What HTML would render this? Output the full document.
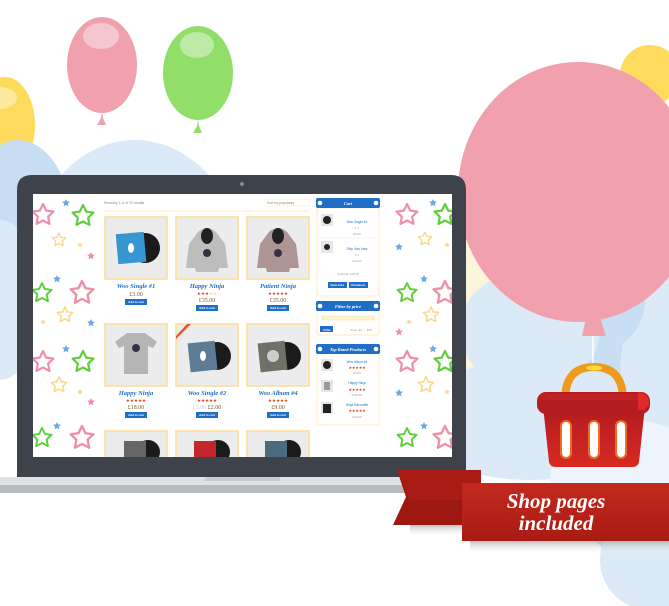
<!DOCTYPE html>
<html><head><meta charset="utf-8"><style>
html,body{margin:0;padding:0;background:#fff;}
svg{display:block;}
</style></head><body>
<svg width="669" height="606" viewBox="0 0 669 606" xmlns="http://www.w3.org/2000/svg" font-family="Liberation Sans, sans-serif">
<defs>
<symbol id="st" viewBox="-10 -10 20 20" overflow="visible"><polygon points="0,-10 2.9,-4 9.5,-3.1 4.7,1.5 5.9,8.1 0,5 -5.9,8.1 -4.7,1.5 -9.5,-3.1 -2.9,-4"/></symbol>
<linearGradient id="rb" x1="0" y1="0" x2="0" y2="1"><stop offset="0" stop-color="#c42a1f"/><stop offset="1" stop-color="#a81b14"/></linearGradient>
<linearGradient id="bk" x1="0" y1="0" x2="0" y2="1"><stop offset="0" stop-color="#b01b20"/><stop offset="1" stop-color="#d82a22"/></linearGradient>
<linearGradient id="sh" x1="0" y1="0" x2="0" y2="1"><stop offset="0" stop-color="#999" stop-opacity=".6"/><stop offset="1" stop-color="#fff" stop-opacity="0"/></linearGradient>
<clipPath id="scr"><rect x="33" y="194" width="419" height="263"/></clipPath>
</defs>
<!-- background -->
<rect width="669" height="606" fill="#fff"/>
<path d="M380 200 L600 200 L600 380 L380 380Z" fill="#fbf5dc"/>
<ellipse cx="650" cy="75" rx="30" ry="30" fill="#fedb5d"/>
<ellipse cx="640" cy="420" rx="90" ry="140" fill="#c8def3"/>
<ellipse cx="700" cy="380" rx="80" ry="140" fill="#dceaf7"/>
<ellipse cx="600" cy="300" rx="45" ry="50" fill="#c8def3"/>
<ellipse cx="530" cy="330" rx="70" ry="60" fill="#dceaf7"/>
<ellipse cx="530" cy="420" rx="120" ry="60" fill="#dceaf7"/>
<ellipse cx="630" cy="480" rx="80" ry="60" fill="#eef4fb"/>
<ellipse cx="650" cy="560" rx="50" ry="50" fill="#dceaf7"/>
<ellipse cx="5" cy="125" rx="30" ry="48" fill="#fedb5d"/>
<ellipse cx="0" cy="98" rx="17" ry="11" fill="#fde89e"/>
<ellipse cx="18" cy="230" rx="55" ry="90" fill="#c6ddf2"/>
<ellipse cx="135" cy="290" rx="115" ry="150" fill="#dceaf7"/>
<ellipse cx="303" cy="260" rx="50" ry="55" fill="#dceaf7"/>
<ellipse cx="0" cy="300" rx="40" ry="80" fill="#dceaf7"/>
<!-- small balloons -->
<ellipse cx="102" cy="65" rx="35" ry="48" fill="#f1a1ae"/>
<ellipse cx="101" cy="36" rx="18" ry="13" fill="#f6c6d0"/>
<path d="M102 112 L101 118 L97 125 L106 125 L103 118Z" fill="#f1a1ae"/>
<ellipse cx="198" cy="73" rx="35" ry="47" fill="#91df69"/>
<ellipse cx="197" cy="45" rx="17" ry="13" fill="#bdeaa6"/>
<path d="M198 120 L197 126 L193 133 L202 133 L199 126Z" fill="#91df69"/>
<!-- big balloon -->
<ellipse cx="578" cy="192" rx="120" ry="130" fill="#f1a1ae"/>
<path d="M586 318 L600 318 L606 336 L582 336Z" fill="#f1a1ae"/>
<line x1="593" y1="336" x2="593" y2="368" stroke="#fff" stroke-width="1.5"/>
<!-- basket -->
<path d="M565 400 Q565 367 594 367 Q623 367 623 400" fill="none" stroke="#ee9a1e" stroke-width="8" stroke-linecap="round"/>
<ellipse cx="594" cy="368" rx="8" ry="2.5" fill="#fde13a"/>
<path d="M543 406 L645 406 L639 462 Q638 467 632 467 L556 467 Q550 467 549 462Z" fill="url(#bk)"/>
<rect x="537" y="392" width="113" height="22" rx="9" fill="#b51c22"/>
<rect x="540" y="394" width="107" height="6" rx="3" fill="#c8252a" opacity=".6"/>
<path d="M638 392 Q650 394 649 405 L644 410 L638 410Z" fill="#e02a2a"/>
<g fill="#fff" stroke="#f06a22" stroke-width="2"><rect x="561" y="421" width="10" height="37" rx="5"/><rect x="589" y="421" width="10" height="37" rx="5"/><rect x="616" y="421" width="10" height="37" rx="5"/></g>
<!-- laptop -->
<path d="M17 190 Q17 175 32 175 L451 175 Q466 175 466 190 L466 477 L17 477Z" fill="#3d424b"/>
<circle cx="242" cy="184" r="2" fill="#888"/>
<rect x="0" y="477" width="472" height="8" fill="#dfe1e5"/>
<rect x="0" y="485" width="472" height="8" fill="#b8babd"/>
<rect x="205" y="477" width="75" height="4" fill="#c8cacd"/>
<!-- screen -->
<rect x="33" y="194" width="419" height="263" fill="#fff"/>
<g clip-path="url(#scr)">
<g stroke-width="2" stroke-linejoin="round">
<g fill="#fff" stroke="#f08fa8">
<use href="#st" x="32" y="204" width="22" height="22"/><use href="#st" x="70" y="281" width="24" height="24"/><use href="#st" x="32" y="351" width="22" height="22"/><use href="#st" x="70" y="426" width="24" height="24"/>
<use href="#st" x="396" y="204" width="22" height="22"/><use href="#st" x="433" y="281" width="24" height="24"/><use href="#st" x="396" y="351" width="22" height="22"/><use href="#st" x="433" y="426" width="24" height="24"/>
</g>
<g fill="#fff" stroke="#5fcf3e">
<use href="#st" x="72" y="205" width="22" height="22"/><use href="#st" x="32" y="283" width="20" height="20"/><use href="#st" x="72" y="351" width="22" height="22"/><use href="#st" x="32" y="428" width="20" height="20"/>
<use href="#st" x="434" y="204" width="22" height="22"/><use href="#st" x="397" y="283" width="20" height="20"/><use href="#st" x="434" y="351" width="22" height="22"/><use href="#st" x="397" y="428" width="20" height="20"/>
</g>
<g fill="#fff" stroke="#fcd98a">
<use href="#st" x="52" y="233" width="14" height="14"/><use href="#st" x="57" y="307" width="16" height="16"/><use href="#st" x="51" y="377" width="16" height="16"/>
<use href="#st" x="418" y="232" width="14" height="14"/><use href="#st" x="423" y="307" width="16" height="16"/><use href="#st" x="418" y="377" width="16" height="16"/>
</g>
</g>
<g fill="#6aa8e6">
<use href="#st" x="62" y="199" width="8" height="8"/><use href="#st" x="53" y="275" width="8" height="8"/><use href="#st" x="87" y="319" width="8" height="8"/><use href="#st" x="62" y="345" width="8" height="8"/><use href="#st" x="53" y="422" width="8" height="8"/>
<use href="#st" x="429" y="199" width="8" height="8"/><use href="#st" x="395" y="243" width="8" height="8"/><use href="#st" x="420" y="275" width="8" height="8"/><use href="#st" x="429" y="345" width="8" height="8"/><use href="#st" x="395" y="389" width="8" height="8"/><use href="#st" x="420" y="422" width="8" height="8"/>
</g>
<g fill="#f08fa8"><use href="#st" x="87" y="252" width="8" height="8"/><use href="#st" x="87" y="398" width="8" height="8"/><use href="#st" x="395" y="328" width="8" height="8"/></g>
<g fill="#fcd98a"><use href="#st" x="77" y="242" width="6" height="6"/><use href="#st" x="40" y="319" width="6" height="6"/><use href="#st" x="77" y="389" width="6" height="6"/><use href="#st" x="444" y="242" width="6" height="6"/><use href="#st" x="406" y="319" width="6" height="6"/><use href="#st" x="444" y="389" width="6" height="6"/></g>

<text x="104" y="204" font-size="3.5" fill="#888">Showing 1–9 of 23 results</text>
<rect x="265" y="199" width="44" height="7" fill="#fff" stroke="#fdeecf" stroke-width=".7"/>
<text x="267" y="204" font-size="3.5" fill="#888">Sort by popularity</text>
<line x1="104" y1="211" x2="309" y2="211" stroke="#fdeecf" stroke-width="1"/>

<!-- products -->
<g fill="#ececec" stroke="#fde2a6" stroke-width="1.8">
<rect x="105" y="217" width="62" height="62"/><rect x="176" y="217" width="62" height="62"/><rect x="247" y="217" width="62" height="62"/>
<rect x="105" y="324" width="62" height="62"/><rect x="176" y="324" width="62" height="62"/><rect x="247" y="324" width="62" height="62"/>
<rect x="105" y="431" width="62" height="62"/><rect x="176" y="431" width="62" height="62"/><rect x="247" y="431" width="62" height="62"/>
</g>
<!-- p1 vinyl -->
<circle cx="145" cy="248" r="15" fill="#1b1b1b"/><rect x="117" y="233" width="28" height="30" fill="#3596d2" transform="rotate(-5 131 248)"/><ellipse cx="131" cy="248" rx="3" ry="5" fill="#fff"/>
<!-- hoodies -->
<path d="M198 232 Q207 224 216 232 L225 244 L228 268 L219 268 L218 272 L196 272 L195 268 L186 268 L189 244Z" fill="#bdbdbd"/><ellipse cx="207" cy="236" rx="6" ry="8" fill="#222"/><circle cx="207" cy="253" r="4" fill="#334"/>
<path d="M269 232 Q278 224 287 232 L296 244 L299 268 L290 268 L289 272 L267 272 L266 268 L257 268 L260 244Z" fill="#ad9595"/><ellipse cx="278" cy="236" rx="6" ry="8" fill="#222"/><circle cx="278" cy="253" r="4" fill="#334"/>
<!-- row2 -->
<path d="M127 333 L145 333 L157 342 L153 348 L148 346 L148 374 L124 374 L124 346 L119 348 L115 342Z" fill="#b5b5b5"/><circle cx="136" cy="348" r="4" fill="#334"/>
<circle cx="217" cy="356" r="14" fill="#1b1b1b"/><rect x="189" y="342" width="27" height="29" fill="#5c7c95" transform="rotate(-6 203 356)"/><ellipse cx="203" cy="356" rx="3" ry="5" fill="#fff"/>
<path d="M176 336 L187 324 L191 324 L176 339Z" fill="#e8572b"/>
<circle cx="287" cy="356" r="14" fill="#1b1b1b"/><rect x="259" y="342" width="27" height="29" fill="#6d7168" transform="rotate(-6 273 356)"/><circle cx="273" cy="356" r="6" fill="#ccc"/>
<!-- row3 -->
<circle cx="148" cy="452" r="12" fill="#1b1b1b"/><rect x="124" y="441" width="22" height="20" fill="#666"/>
<circle cx="218" cy="452" r="12" fill="#1b1b1b"/><rect x="194" y="441" width="22" height="20" fill="#c3272b"/>
<circle cx="289" cy="452" r="12" fill="#1b1b1b"/><rect x="265" y="441" width="22" height="20" fill="#4b6b80"/>

<g font-family="Liberation Serif, serif" font-style="italic" font-weight="bold" fill="#1f6fc6" font-size="6.5" text-anchor="middle">
<text x="136" y="288">Woo Single #1</text><text x="207" y="288">Happy Ninja</text><text x="278" y="288">Patient Ninja</text>
<text x="136" y="395">Happy Ninja</text><text x="207" y="395">Woo Single #2</text><text x="278" y="395">Woo Album #4</text>
</g>
<g fill="#e53a1a" font-size="4.5" text-anchor="middle">
<text x="207" y="295">★★★<tspan fill="#f5d9a0">★★</tspan></text><text x="278" y="295">★★★★★</text>
<text x="136" y="402">★★★★★</text><text x="207" y="402">★★★★★</text><text x="278" y="402">★★★★★</text>
</g>
<g font-family="Liberation Serif, serif" fill="#7a5a2a" font-size="6" text-anchor="middle">
<text x="136" y="296">£3.00</text><text x="207" y="302">£35.00</text><text x="278" y="302">£35.00</text>
<text x="136" y="409">£18.00</text><text x="207" y="409"><tspan fill="#ccc">£3.00</tspan> £2.00</text><text x="278" y="409">£9.00</text>
</g>
<g fill="#1f6fc6">
<rect x="125" y="299" width="22" height="6"/><rect x="196" y="305" width="22" height="6"/><rect x="267" y="305" width="22" height="6"/>
<rect x="125" y="412" width="22" height="6"/><rect x="196" y="412" width="22" height="6"/><rect x="267" y="412" width="22" height="6"/>
</g>
<g fill="#fff" font-size="3" text-anchor="middle" font-weight="bold">
<text x="136" y="303">Add to cart</text><text x="207" y="309">Add to cart</text><text x="278" y="309">Add to cart</text>
<text x="136" y="416">Add to cart</text><text x="207" y="416">Add to cart</text><text x="278" y="416">Add to cart</text>
</g>
<!-- sidebar -->
<g fill="#fff" stroke="#fde9bf" stroke-width="1">
<rect x="317" y="208" width="62" height="88" rx="2"/><rect x="317" y="310" width="62" height="25" rx="2"/><rect x="317" y="353" width="62" height="72" rx="2"/>
</g>
<g fill="#1f6fc6">
<rect x="316" y="198" width="64" height="10" rx="2"/><rect x="316" y="301" width="64" height="10" rx="2"/><rect x="316" y="344" width="64" height="10" rx="2"/>
</g>
<g fill="#fff"><circle cx="320" cy="203" r="2.3"/><circle cx="376" cy="203" r="2.3"/><circle cx="320" cy="306" r="2.3"/><circle cx="376" cy="306" r="2.3"/><circle cx="320" cy="349" r="2.3"/><circle cx="376" cy="349" r="2.3"/></g>
<g fill="#fff" font-size="4.5" font-weight="bold" text-anchor="middle" font-family="Liberation Serif, serif" font-style="italic">
<text x="348" y="205">Cart</text><text x="348" y="308">Filter by price</text><text x="348" y="351">Top Rated Products</text>
</g>
<g fill="#e6e6e6"><rect x="321" y="214" width="12" height="12"/><rect x="321" y="241" width="12" height="12"/><rect x="321" y="359" width="12" height="12"/><rect x="321" y="380" width="12" height="12"/><rect x="321" y="402" width="12" height="12"/></g>
<g fill="#222"><circle cx="327" cy="220" r="4"/><circle cx="327" cy="247" r="3"/><circle cx="327" cy="365" r="4"/><rect x="324" y="382" width="6" height="8" fill="#999"/><rect x="323" y="404" width="8" height="9"/></g>
<g font-size="3.2" fill="#1f6fc6" text-anchor="middle">
<text x="357" y="223">Woo Single #1</text><text x="357" y="250">Ship Your Idea</text>
<text x="357" y="363">Woo Album #4</text><text x="357" y="384">Happy Ninja</text><text x="357" y="406">Ninja Silhouette</text>
</g>
<g font-size="3" fill="#999" text-anchor="middle">
<text x="357" y="229">1 ×</text><text x="357" y="235">£3.00</text><text x="357" y="256">1 ×</text><text x="357" y="262">£11.00</text>
<text x="348" y="275">Subtotal: £15.00</text>
<text x="357" y="374">£9.00</text><text x="357" y="396">£35.00</text><text x="357" y="418">£20.00</text>
<text x="361" y="331">Price: £2 — £35</text>
</g>
<g fill="#e53a1a" font-size="3.8" text-anchor="middle"><text x="357" y="369">★★★★★</text><text x="357" y="391">★★★★★</text><text x="357" y="412">★★★★★</text></g>
<line x1="320" y1="238" x2="376" y2="238" stroke="#fdeecf" stroke-width=".5"/>
<rect x="328" y="282" width="19" height="6" fill="#1f6fc6"/><rect x="349" y="282" width="19" height="6" fill="#1f6fc6"/>
<g fill="#fff" font-size="3" text-anchor="middle" font-weight="bold"><text x="337" y="286">View Cart</text><text x="358" y="286">Checkout</text><text x="327" y="331">Filter</text></g>
<rect x="321" y="316" width="54" height="4" rx="2" fill="#fbf3d0" stroke="#fde3a7" stroke-width=".5"/>
<rect x="320" y="326" width="13" height="6" fill="#1f6fc6"/>
<text x="327" y="331" fill="#fff" font-size="3" text-anchor="middle" font-weight="bold">Filter</text>
</g>
<!-- ribbon -->
<rect x="410" y="525" width="80" height="12" fill="url(#sh)"/>
<rect x="470" y="541" width="199" height="14" fill="url(#sh)"/>
<path d="M397 470 L481 470 L481 525 L393 525 L406 497Z" fill="#9e1812"/>
<path d="M397 470 L481 470 L481 500 L410 500Z" fill="#b4201a" opacity=".5"/>
<rect x="462" y="483" width="207" height="58" fill="url(#rb)"/>
<g font-family="Liberation Serif, serif" font-style="italic" font-weight="bold" fill="#fff" font-size="21" text-anchor="middle">
<text x="556" y="508">Shop pages</text><text x="556" y="530">included</text>
</g>
</svg>
</body></html>
